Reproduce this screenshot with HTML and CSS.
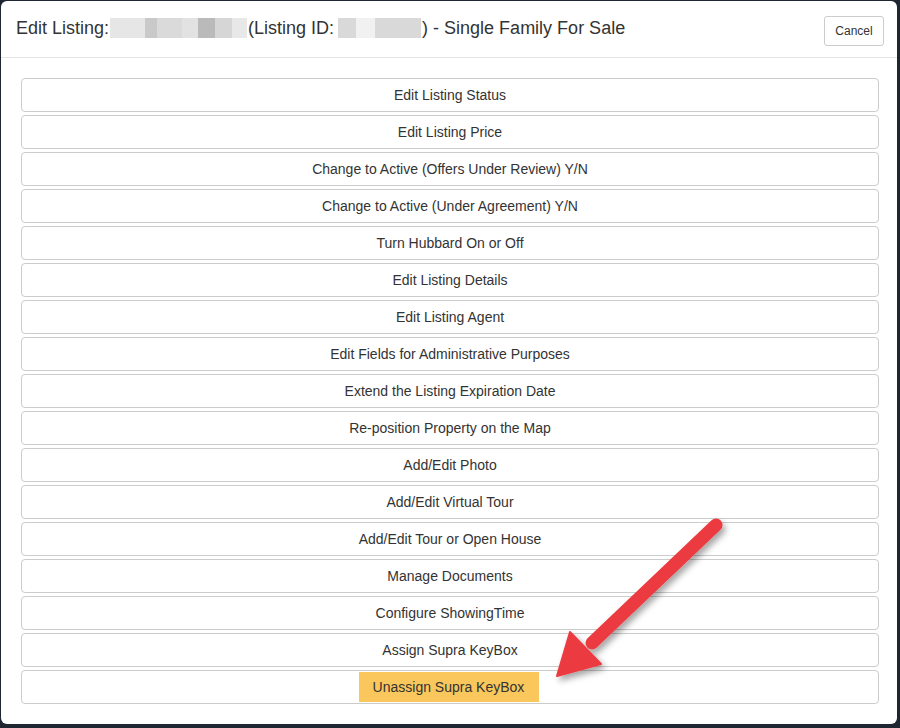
FILE: index.html
```html
<!DOCTYPE html>
<html>
<head>
<meta charset="utf-8">
<link rel="stylesheet" href="styles.css">
</head>
<body>
<div class="modal">
  <div class="modal-header">
    <h1 class="title">Edit Listing:<span class="blur blur-name"></span>(Listing ID:<span class="blur blur-id"></span>) - Single Family For Sale</h1>
    <button class="cancel">Cancel</button>
  </div>
  <div class="modal-body">
    <div class="row">Edit Listing Status</div>
    <div class="row">Edit Listing Price</div>
    <div class="row">Change to Active (Offers Under Review) Y/N</div>
    <div class="row">Change to Active (Under Agreement) Y/N</div>
    <div class="row">Turn Hubbard On or Off</div>
    <div class="row">Edit Listing Details</div>
    <div class="row">Edit Listing Agent</div>
    <div class="row">Edit Fields for Administrative Purposes</div>
    <div class="row">Extend the Listing Expiration Date</div>
    <div class="row">Re-position Property on the Map</div>
    <div class="row">Add/Edit Photo</div>
    <div class="row">Add/Edit Virtual Tour</div>
    <div class="row">Add/Edit Tour or Open House</div>
    <div class="row">Manage Documents</div>
    <div class="row">Configure ShowingTime</div>
    <div class="row">Assign Supra KeyBox</div>
    <div class="row"><span class="highlight">Unassign Supra KeyBox</span></div>
  </div>
</div>
<svg class="arrow" width="900" height="728" viewBox="0 0 900 728">
  <defs>
    <filter id="sh" x="-20%" y="-20%" width="140%" height="140%">
      <feDropShadow dx="3" dy="4" stdDeviation="3" flood-color="#000" flood-opacity="0.35"/>
    </filter>
  </defs>
  <g filter="url(#sh)" fill="#ec3b40" stroke="#ec3b40">
    <line x1="716" y1="525" x2="592" y2="643" stroke-width="13" stroke-linecap="round"/>
    <polygon points="557,676 570,632 601,664" stroke-width="2" stroke-linejoin="round"/>
  </g>
</svg>
</body>
</html>
```
FILE: styles.css
```css
html, body {
  margin: 0;
  padding: 0;
}
body {
  width: 900px;
  height: 728px;
  background: #1d2631;
  font-family: "Liberation Sans", Arial, sans-serif;
  color: #333;
  position: relative;
  overflow: hidden;
}
.modal {
  position: absolute;
  left: 1px;
  top: 1px;
  width: 896px;
  height: 723px;
  background: #fff;
  border-radius: 6px;
  box-sizing: border-box;
}
.modal-header {
  height: 57px;
  box-sizing: border-box;
  border-bottom: 1px solid #e5e5e5;
  display: flex;
  align-items: center;
  justify-content: space-between;
  padding: 0 12px 0 15px;
}
.title {
  margin: 0;
  font-size: 18px;
  font-weight: normal;
  color: #333;
  display: flex;
  align-items: center;
  white-space: pre;
  position: relative;
  top: -1px;
}
.blur {
  display: inline-block;
  height: 20px;
}
.blur-name {
  width: 137px;
  margin: 0 1px 0 1px;
  background: linear-gradient(to right,
    #e6e6e6 0, #e6e6e6 35px,
    #c9c9c9 35px, #c9c9c9 47px,
    #dadada 47px, #dadada 72px,
    #e2e2e2 72px, #e2e2e2 88px,
    #bababa 88px, #bababa 105px,
    #d6d6d6 105px, #d6d6d6 122px,
    #e8e8e8 122px);
}
.blur-id {
  width: 83px;
  margin: 0 1px 0 4px;
  background: linear-gradient(to right,
    #d9d9d9 0, #d9d9d9 18px,
    #f1f1f1 18px, #f1f1f1 37px,
    #d9d9d9 37px);
}
.cancel {
  width: 60px;
  height: 30px;
  border: 1px solid #ccc;
  border-radius: 3px;
  background: #fff;
  font-family: "Liberation Sans", Arial, sans-serif;
  font-size: 12px;
  color: #333;
  padding: 0;
  margin-top: 3px;
  margin-right: 1px;
}
.modal-body {
  padding: 20px 18px 0 20px;
  display: flex;
  flex-direction: column;
  gap: 3px;
}
.row {
  height: 34px;
  box-sizing: border-box;
  border: 1px solid #ccc;
  border-radius: 4px;
  display: flex;
  align-items: center;
  justify-content: center;
  font-size: 14px;
  color: #333;
}
.highlight {
  display: flex;
  align-items: center;
  justify-content: center;
  width: 180px;
  height: 30px;
  background: #f9c75b;
  margin-right: 3px;
}
.arrow {
  position: absolute;
  left: 0;
  top: 0;
  pointer-events: none;
}
```
